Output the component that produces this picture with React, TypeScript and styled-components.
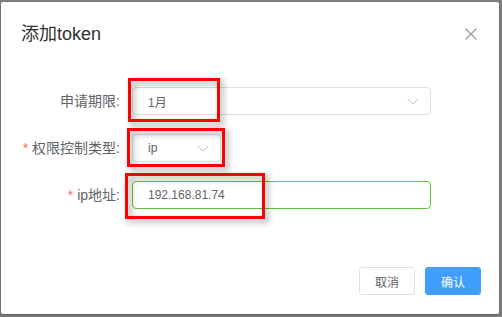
import React from 'react'
import styled, { createGlobalStyle } from 'styled-components'

const GlobalStyle = createGlobalStyle`
  html, body {
    margin: 0;
    padding: 0;
    background: #808080;
    font-family: "Liberation Sans", Arial, "Noto Sans CJK SC", sans-serif;
  }
`

const Page = styled.div`
  width: 502px;
  height: 317px;
  padding: 2px 0 0 1px;
  box-sizing: border-box;
`

const Dialog = styled.div`
  position: relative;
  width: 498px;
  height: 312px;
  background: #fff;
  border-radius: 2px;
  box-shadow: 0 1px 3px rgba(0, 0, 0, 0.3);
  box-sizing: border-box;
`

const Header = styled.div`
  display: flex;
  align-items: center;
  justify-content: space-between;
  padding: 20px 20px 10px;
`

const Title = styled.span`
  font-size: 18px;
  line-height: 24px;
  color: #303133;
`

const Close = styled.button`
  width: 16px;
  height: 16px;
  padding: 0;
  border: 0;
  background: none;
  display: flex;
  align-items: center;
  justify-content: center;
  cursor: pointer;
`

const Body = styled.div`
  padding: 31px 20px 29px;
`

const Row = styled.div`
  display: flex;
  align-items: center;
  height: 28px;
  margin-bottom: 19px;
`

const Label = styled.label`
  width: 111px;
  box-sizing: border-box;
  padding-right: 12px;
  text-align: right;
  white-space: nowrap;
  font-size: 14px;
  color: #606266;
  line-height: 28px;
`

const Star = styled.span`
  color: #f56c6c;
  margin-right: 4px;
`

const Field = styled.div<{ $width: number; $active?: boolean }>`
  position: relative;
  width: ${(p) => p.$width}px;
  height: 28px;
  box-sizing: border-box;
  border: 1px solid ${(p) => (p.$active ? '#67c23a' : '#dcdfe6')};
  border-radius: 4px;
  display: flex;
  align-items: center;
  padding: 0 15px;
  font-size: 12px;
  color: #606266;
`

const Arrow = styled.svg`
  position: absolute;
  right: 11px;
  top: 10px;
`

const Footer = styled.div`
  display: flex;
  justify-content: flex-end;
  gap: 10px;
  padding: 10px 18px 20px 20px;
`

const Button = styled.button<{ $primary?: boolean }>`
  height: 28px;
  padding: 0 15px;
  font-family: inherit;
  font-size: 12px;
  border-radius: 3px;
  border: 1px solid ${(p) => (p.$primary ? '#409eff' : '#dcdfe6')};
  background: ${(p) => (p.$primary ? '#409eff' : '#fff')};
  color: ${(p) => (p.$primary ? '#fff' : '#606266')};
  cursor: pointer;
`

const Mark = styled.div<{ $x: number; $y: number; $w: number; $h: number }>`
  position: absolute;
  left: ${(p) => p.$x}px;
  top: ${(p) => p.$y}px;
  width: ${(p) => p.$w}px;
  height: ${(p) => p.$h}px;
  box-sizing: border-box;
  border: 3px solid #ff0000;
  filter: drop-shadow(3px 3px 3px rgba(0, 0, 0, 0.4));
  pointer-events: none;
`

const Chevron = () => (
  <Arrow width="12" height="7" viewBox="0 0 12 7">
    <path d="M0.5 0.8 L6 6 L11.5 0.8" fill="none" stroke="#c0c4cc" strokeWidth="1" />
  </Arrow>
)

export default function App() {
  return (
    <Page>
      <GlobalStyle />
      <Dialog>
        <Header>
          <Title>添加token</Title>
          <Close aria-label="关闭">
            <svg width="12" height="12" viewBox="0 0 12 12">
              <path d="M0.5 0.5 L11.5 11.5 M11.5 0.5 L0.5 11.5" stroke="#909399" strokeWidth="1.1" />
            </svg>
          </Close>
        </Header>
        <Body>
          <Row>
            <Label>申请期限:</Label>
            <Field $width={299}>
              1月
              <Chevron />
            </Field>
          </Row>
          <Row>
            <Label>
              <Star>*</Star>权限控制类型:
            </Label>
            <Field $width={89}>
              ip
              <Chevron />
            </Field>
          </Row>
          <Row>
            <Label>
              <Star>*</Star>ip地址:
            </Label>
            <Field $width={299} $active>
              192.168.81.74
            </Field>
          </Row>
        </Body>
        <Footer>
          <Button>取消</Button>
          <Button $primary>确认</Button>
        </Footer>
        <Mark $x={127} $y={76} $w={92} $h={44} />
        <Mark $x={126} $y={126} $w={98} $h={39} />
        <Mark $x={124} $y={171} $w={140} $h={46} />
      </Dialog>
    </Page>
  )
}
